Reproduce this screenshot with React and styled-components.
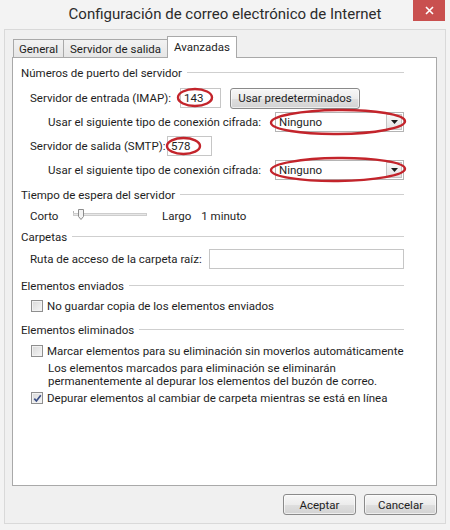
import React from 'react';
import styled, { createGlobalStyle } from 'styled-components';

const FONT = `Roboto, "Noto Sans", "Liberation Sans", sans-serif`;

const GlobalStyle = createGlobalStyle`
  html, body { margin: 0; padding: 0; background: #f3f3f3; }
  body { font-family: ${FONT}; }
`;

const Window = styled.div`
  width: 450px;
  height: 530px;
  box-sizing: border-box;
  background: #f3f3f3;
  font-family: ${FONT};
  font-size: 11.5px;
  color: #1e1e1e;
  display: flex;
  flex-direction: column;
`;

const TitleBar = styled.div`
  height: 29px;
  display: grid;
  grid-template-columns: 1fr auto 1fr;
  align-items: start;
`;

const Title = styled.div`
  grid-column: 2;
  font-size: 15px;
  color: #2b2b2b;
  line-height: 29px;
  white-space: nowrap;
`;

const CloseButton = styled.div`
  grid-column: 3;
  justify-self: end;
  margin-right: 5px;
  width: 32px;
  height: 21px;
  background: #c9504f;
  display: flex;
  align-items: center;
  justify-content: center;
`;

const Frame = styled.div`
  margin-left: 4px;
  width: 442px;
  height: 495px;
  box-sizing: border-box;
  border: 1px solid #d9d9d9;
  background: #f0f0f0;
  padding: 6px 8px 0 7px;
  display: flex;
  flex-direction: column;
`;

const TabStrip = styled.div`
  display: flex;
  align-items: flex-end;
  height: 21px;
  margin-left: 1px;
`;

const Tab = styled.div`
  box-sizing: border-box;
  width: ${p => p.$w}px;
  height: ${p => (p.$active ? 22 : 18)}px;
  margin-left: ${p => (p.$first ? 0 : -1)}px;
  margin-bottom: ${p => (p.$active ? -1 : 0)}px;
  border: 1px solid #a9a9a9;
  border-bottom: none;
  background: ${p => (p.$active ? '#ffffff' : 'linear-gradient(#f2f2f2, #e6e6e6)')};
  text-align: center;
  line-height: ${p => (p.$active ? 20 : 18)}px;
  white-space: nowrap;
  position: relative;
  z-index: ${p => (p.$active ? 1 : 0)};
`;

const Panel = styled.div`
  width: 425px;
  height: 429px;
  box-sizing: border-box;
  border: 1px solid #a9a9a9;
  background: #ffffff;
  padding: 7px 32px 0 8px;
  display: flex;
  flex-direction: column;
`;

const SectionHeader = styled.div`
  display: flex;
  align-items: center;
  height: 16px;
  margin-top: ${p => p.$mt || 0}px;
  white-space: nowrap;
  &::after {
    content: '';
    flex: 1;
    height: 1px;
    margin-left: 5px;
    margin-top: -1px;
    background: #cfcfcf;
  }
`;

const Row = styled.div`
  display: flex;
  align-items: center;
  height: 20px;
  margin-top: ${p => p.$mt || 0}px;
  padding-left: ${p => p.$indent || 0}px;
  white-space: nowrap;
`;

const Label = styled.span`
  display: inline-block;
  width: ${p => (p.$w ? `${p.$w}px` : 'auto')};
  margin-left: ${p => p.$ml || 0}px;
  flex-shrink: 0;
`;

const Annotated = styled.div`
  position: relative;
  display: flex;
  margin-left: ${p => (p.$auto ? 'auto' : `${p.$ml || 0}px`)};
`;

const RedMark = styled.svg`
  position: absolute;
  left: 0;
  top: 0;
  width: 100%;
  height: 100%;
  overflow: visible;
  pointer-events: none;
  z-index: 2;
`;

const TextInput = styled.input`
  box-sizing: border-box;
  width: ${p => p.$w}px;
  height: 20px;
  border: 1px solid #c6c6c6;
  background: #fff;
  padding: 0 0 0 3px;
  margin: 0;
  font: inherit;
  color: #1e1e1e;
  outline: none;
  margin-left: ${p => (p.$auto ? 'auto' : '0')};
`;

const PushButton = styled.button`
  box-sizing: border-box;
  width: ${p => p.$w}px;
  height: 21px;
  margin: 0 0 0 ${p => p.$ml || 0}px;
  padding: 0;
  border: 1px solid #8a8a8a;
  border-radius: 3px;
  background: linear-gradient(#f7f7f7, #ececec 50%, #dfdfdf 51%, #d3d3d3);
  font: inherit;
  color: #1e1e1e;
  box-shadow: inset 0 0 0 1px rgba(255, 255, 255, 0.6);
`;

const Combo = styled.div`
  box-sizing: border-box;
  width: 129px;
  height: 20px;
  border: 1px solid #b4b4b4;
  background: #fff;
  display: flex;
  align-items: center;
  padding-left: 3px;
`;

const ComboArrow = styled.div`
  margin-left: auto;
  width: 16px;
  height: 16px;
  margin-right: 1px;
  display: flex;
  align-items: center;
  justify-content: center;
  background: linear-gradient(#f8f8f8, #e2e2e2);
  border: 1px solid #c4c4c4;
  box-sizing: border-box;
`;

const SliderBox = styled.svg`
  margin-left: ${p => p.$ml}px;
  flex-shrink: 0;
`;

const CheckBox = styled.span`
  box-sizing: border-box;
  width: 12px;
  height: 12px;
  flex-shrink: 0;
  border: 1px solid #8f8f8f;
  background: linear-gradient(135deg, #d8d8d8, #f6f6f6);
  box-shadow: inset 0 0 0 1px #f2f2f2;
  display: flex;
  align-items: center;
  justify-content: center;
`;

const Paragraph = styled.div`
  margin-top: ${p => p.$mt || 0}px;
  padding-left: ${p => p.$indent}px;
  line-height: 13px;
`;

const ButtonRow = styled.div`
  display: flex;
  justify-content: flex-end;
  gap: 8px;
  margin-top: 8px;
`;

function Mark({ cx, cy, rx, ry, rot = 0 }) {
  return (
    <RedMark aria-hidden="true">
      <ellipse
        cx={cx}
        cy={cy}
        rx={rx}
        ry={ry}
        fill="none"
        stroke="#c3242b"
        strokeWidth="2.4"
        transform={`rotate(${rot} ${cx} ${cy})`}
      />
    </RedMark>
  );
}

function ComboBox({ value }) {
  return (
    <Combo>
      {value}
      <ComboArrow>
        <svg width="7" height="4" viewBox="0 0 7 4">
          <path d="M0 0 H7 L3.5 4 Z" fill="#1a1a1a" />
        </svg>
      </ComboArrow>
    </Combo>
  );
}

function Check({ checked, label }) {
  return (
    <>
      <CheckBox>
        {checked && (
          <svg width="9" height="9" viewBox="0 0 9 9">
            <path d="M1.3 4.6 L3.4 7 L7.8 1.2" fill="none" stroke="#3b4f86" strokeWidth="1.7" />
          </svg>
        )}
      </CheckBox>
      <Label $ml={4}>{label}</Label>
    </>
  );
}

export default function App() {
  return (
    <>
      <GlobalStyle />
      <Window>
        <TitleBar>
          <Title>Configuración de correo electrónico de Internet</Title>
          <CloseButton>
            <svg width="9" height="9" viewBox="0 0 9 9">
              <path d="M1 1 L8 8 M8 1 L1 8" stroke="#ffffff" strokeWidth="1.6" />
            </svg>
          </CloseButton>
        </TitleBar>
        <Frame>
          <TabStrip>
            <Tab $first $w={51}>General</Tab>
            <Tab $w={105}>Servidor de salida</Tab>
            <Tab $active $w={70}>Avanzadas</Tab>
          </TabStrip>
          <Panel>
            <SectionHeader>Números de puerto del servidor</SectionHeader>
            <Row $mt={7} $indent={9}>
              <Label $w={150}>Servidor de entrada (IMAP):</Label>
              <Annotated>
                <TextInput $w={41} defaultValue="143" readOnly />
                <Mark cx={15} cy={9.5} rx={17} ry={8.5} />
              </Annotated>
              <PushButton $w={130} $ml={9}>Usar predeterminados</PushButton>
            </Row>
            <Row $mt={4} $indent={27}>
              <Label>Usar el siguiente tipo de conexión cifrada:</Label>
              <Annotated $auto>
                <ComboBox value="Ninguno" />
                <Mark cx={63} cy={10} rx={67} ry={12} rot={-0.6} />
              </Annotated>
            </Row>
            <Row $mt={4} $indent={9}>
              <Label $w={137}>Servidor de salida (SMTP):</Label>
              <Annotated>
                <TextInput $w={45} defaultValue="578" readOnly />
                <Mark cx={16.5} cy={10} rx={16.5} ry={8} />
              </Annotated>
            </Row>
            <Row $mt={4} $indent={27}>
              <Label>Usar el siguiente tipo de conexión cifrada:</Label>
              <Annotated $auto>
                <ComboBox value="Ninguno" />
                <Mark cx={63} cy={9.5} rx={67} ry={11.5} rot={-0.6} />
              </Annotated>
            </Row>

            <SectionHeader $mt={7}>Tiempo de espera del servidor</SectionHeader>
            <Row $mt={3} $indent={9}>
              <Label $w={43}>Corto</Label>
              <SliderBox $ml={0} width="74" height="20" viewBox="0 0 74 20">
                <line x1="0.5" y1="5" x2="0.5" y2="9" stroke="#b5b5b5" />
                <rect x="0.5" y="7.5" width="73" height="2" fill="#e7e7e7" stroke="#cdcdcd" />
                <path d="M5.5 3.5 H10.5 V10.5 L8 13.5 L5.5 10.5 Z" fill="#f3f3f3" stroke="#8c8c8c" />
              </SliderBox>
              <Label $ml={15}>Largo</Label>
              <Label $ml={10}>1 minuto</Label>
            </Row>

            <SectionHeader $mt={3}>Carpetas</SectionHeader>
            <Row $mt={4} $indent={9}>
              <Label>Ruta de acceso de la carpeta raíz:</Label>
              <TextInput $w={195} $auto readOnly />
            </Row>

            <SectionHeader $mt={9}>Elementos enviados</SectionHeader>
            <Row $mt={2} $indent={10}>
              <Check label="No guardar copia de los elementos enviados" />
            </Row>

            <SectionHeader $mt={6}>Elementos eliminados</SectionHeader>
            <Row $mt={3} $indent={10}>
              <Check label="Marcar elementos para su eliminación sin moverlos automáticamente" />
            </Row>
            <Paragraph $mt={1} $indent={27}>
              Los elementos marcados para eliminación se eliminarán
              <br />
              permanentemente al depurar los elementos del buzón de correo.
            </Paragraph>
            <Row $indent={10}>
              <Check checked label="Depurar elementos al cambiar de carpeta mientras se está en línea" />
            </Row>
          </Panel>
          <ButtonRow>
            <PushButton $w={73}>Aceptar</PushButton>
            <PushButton $w={73}>Cancelar</PushButton>
          </ButtonRow>
        </Frame>
      </Window>
    </>
  );
}
